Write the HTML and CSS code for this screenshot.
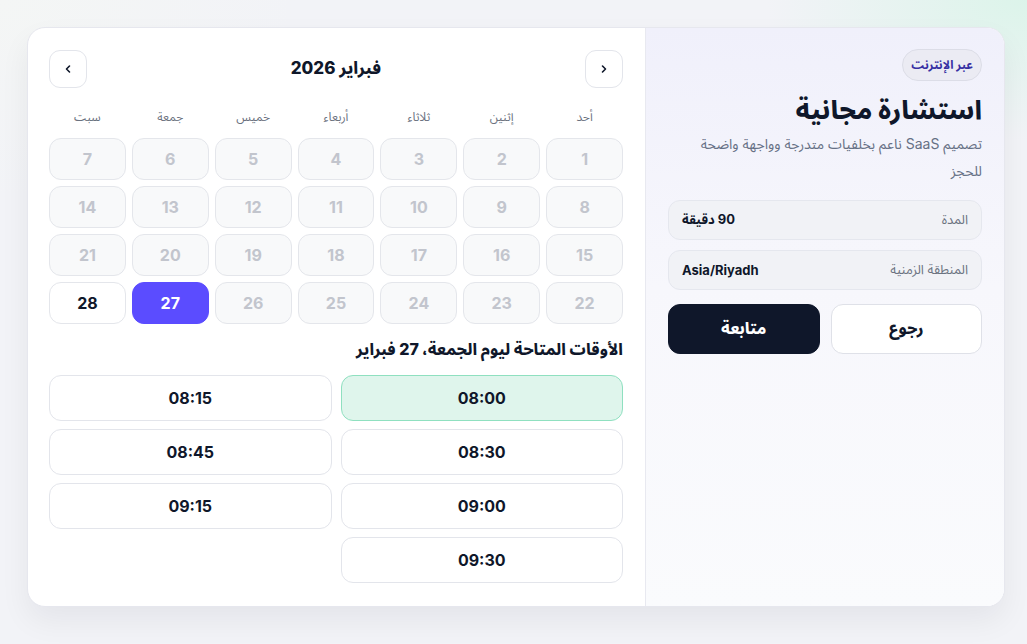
FILE: index.html
```html
<!DOCTYPE html>
<html lang="ar" dir="rtl">
<head>
<meta charset="utf-8">
<title>حجز استشارة</title>
<link rel="stylesheet" href="styles.css">
</head>
<body>
<div class="page">
  <div class="card">
    <aside class="side">
      <span class="badge">عبر الإنترنت</span>
      <h1 class="title">استشارة مجانية</h1>
      <p class="desc">تصميم SaaS ناعم بخلفيات متدرجة وواجهة واضحة للحجز</p>
      <div class="info">
        <span class="info-label">المدة</span>
        <span class="info-value">90 دقيقة</span>
      </div>
      <div class="info">
        <span class="info-label">المنطقة الزمنية</span>
        <span class="info-value" dir="ltr">Asia/Riyadh</span>
      </div>
      <div class="actions">
        <button class="btn btn-ghost">رجوع</button>
        <button class="btn btn-dark">متابعة</button>
      </div>
    </aside>
    <main class="main">
      <div class="cal-head">
        <button class="nav-btn" aria-label="السابق">
          <svg width="10" height="10" viewBox="0 0 10 10"><path d="M3.5 2 L6.5 5 L3.5 8" fill="none" stroke="#0f172a" stroke-width="1.6" stroke-linecap="round" stroke-linejoin="round"/></svg>
        </button>
        <div class="month">فبراير 2026</div>
        <button class="nav-btn" aria-label="التالي">
          <svg width="10" height="10" viewBox="0 0 10 10"><path d="M6.5 2 L3.5 5 L6.5 8" fill="none" stroke="#0f172a" stroke-width="1.6" stroke-linecap="round" stroke-linejoin="round"/></svg>
        </button>
      </div>
      <div class="weekdays">
        <span>أحد</span><span>إثنين</span><span>ثلاثاء</span><span>أربعاء</span><span>خميس</span><span>جمعة</span><span>سبت</span>
      </div>
      <div class="days">
        <span class="day">1</span><span class="day">2</span><span class="day">3</span><span class="day">4</span><span class="day">5</span><span class="day">6</span><span class="day">7</span>
        <span class="day">8</span><span class="day">9</span><span class="day">10</span><span class="day">11</span><span class="day">12</span><span class="day">13</span><span class="day">14</span>
        <span class="day">15</span><span class="day">16</span><span class="day">17</span><span class="day">18</span><span class="day">19</span><span class="day">20</span><span class="day">21</span>
        <span class="day">22</span><span class="day">23</span><span class="day">24</span><span class="day">25</span><span class="day">26</span><span class="day day-selected">27</span><span class="day day-open">28</span>
      </div>
      <h2 class="slots-title">الأوقات المتاحة ليوم الجمعة، 27 فبراير</h2>
      <div class="slots">
        <span class="slot slot-selected">08:00</span>
        <span class="slot">08:15</span>
        <span class="slot">08:30</span>
        <span class="slot">08:45</span>
        <span class="slot">09:00</span>
        <span class="slot">09:15</span>
        <span class="slot">09:30</span>
      </div>
    </main>
  </div>
</div>
</body>
</html>
```

FILE: styles.css
```css
* { box-sizing: border-box; }

html, body {
  margin: 0;
  height: 100%;
}

body {
  font-family: "Inter", "Noto Sans Arabic", "DejaVu Sans", sans-serif;
  color: #0f172a;
  background:
    radial-gradient(ellipse 260px 140px at 100% 0%, #dcf4ea 0%, rgba(220,244,234,0) 100%),
    radial-gradient(ellipse 300px 200px at 0% 0%, #f4f6f5 0%, rgba(244,246,245,0) 100%),
    #f2f3f7;
}

.page {
  padding: 27px 22px 0 27px;
}

.card {
  display: flex;
  height: 580px;
  background: #ffffff;
  border: 1px solid #e6e7ee;
  border-radius: 18px;
  overflow: hidden;
  box-shadow: 0 14px 30px rgba(15, 23, 42, 0.06);
}

/* Sidebar */
.side {
  width: 359px;
  flex: none;
  display: flex;
  flex-direction: column;
  align-items: stretch;
  padding: 21px 22px;
  background: linear-gradient(180deg, #f0f0fb 0%, #f7f7fc 45%, #fafbfd 100%);
  border-left: 1px solid #e8e9f0;
}

.badge {
  align-self: flex-start;
  height: 32px;
  display: inline-flex;
  align-items: center;
  padding: 0 8px;
  border-radius: 16px;
  background: #ebebf3;
  border: 1px solid #dcdde7;
  color: #3730a3;
  font-size: 12px;
  font-weight: 700;
}

.title {
  margin: 12px 0 0;
  font-size: 26px;
  line-height: 34px;
  font-weight: 800;
  color: #0f172a;
}

.desc {
  margin: 3px 0 0;
  font-size: 14px;
  line-height: 27px;
  color: #667085;
}

.info {
  margin-top: 16px;
  height: 40px;
  display: flex;
  align-items: center;
  justify-content: space-between;
  padding: 0 13px;
  border-radius: 12px;
  background: #f1f2f6;
  border: 1px solid #e5e7ee;
}

.info + .info { margin-top: 10px; }

.info-label {
  font-size: 13px;
  color: #6b7280;
}

.info-value {
  font-size: 13px;
  font-weight: 700;
  color: #0f172a;
}

.actions {
  margin-top: 14px;
  display: grid;
  grid-template-columns: 1fr 1fr;
  gap: 11px;
}

.btn {
  height: 50px;
  border-radius: 12px;
  font-family: inherit;
  font-size: 16px;
  font-weight: 800;
  cursor: pointer;
}

.btn-ghost {
  background: #ffffff;
  border: 1px solid #dfe1e8;
  color: #0f172a;
}

.btn-dark {
  background: #0f172a;
  border: 1px solid #0f172a;
  color: #ffffff;
}

/* Main calendar */
.main {
  flex: 1;
  padding: 22px 22px 22px 21px;
  display: flex;
  flex-direction: column;
}

.cal-head {
  display: flex;
  align-items: center;
  justify-content: space-between;
  height: 38px;
}

.nav-btn {
  width: 38px;
  height: 38px;
  padding: 0;
  display: flex;
  align-items: center;
  justify-content: center;
  background: #ffffff;
  border: 1px solid #e3e5eb;
  border-radius: 11px;
  cursor: pointer;
}

.month {
  font-size: 17px;
  font-weight: 800;
  color: #0f172a;
}

.weekdays {
  margin-top: 17px;
  display: grid;
  grid-template-columns: repeat(7, 1fr);
  gap: 6px;
  height: 20px;
  align-items: center;
}

.weekdays span {
  text-align: center;
  font-size: 12px;
  color: #6b7280;
}

.days {
  margin-top: 13px;
  display: grid;
  grid-template-columns: repeat(7, 1fr);
  grid-auto-rows: 42px;
  gap: 6px;
}

.day {
  display: flex;
  align-items: center;
  justify-content: center;
  background: #f8f9fa;
  border: 1px solid #e4e6eb;
  border-radius: 12px;
  color: #c2c5cd;
  font-size: 16px;
  font-weight: 700;
}

.day-selected {
  background: #5b4cff;
  border-color: #5b4cff;
  color: #ffffff;
}

.day-open {
  background: #ffffff;
  color: #0f172a;
}

.slots-title {
  margin: 14px 0 0;
  font-size: 16px;
  line-height: 22px;
  font-weight: 800;
  color: #0f172a;
}

.slots {
  margin-top: 15px;
  display: grid;
  grid-template-columns: 1fr 1fr;
  grid-auto-rows: 46px;
  column-gap: 9px;
  row-gap: 8px;
}

.slot {
  display: flex;
  align-items: center;
  justify-content: center;
  background: #ffffff;
  border: 1px solid #e3e5eb;
  border-radius: 12px;
  font-size: 16px;
  font-weight: 700;
  color: #0f172a;
}

.slot-selected {
  background: #dff5ec;
  border-color: #8fe0c0;
}
```
